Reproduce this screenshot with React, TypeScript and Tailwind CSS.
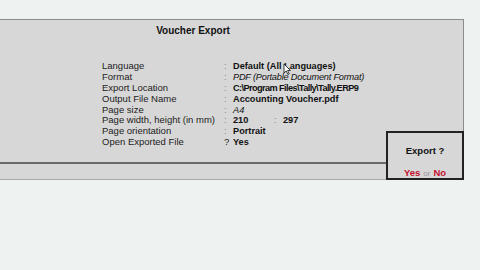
import React from 'react';

const rows: { label: string; sep: string; value: React.ReactNode; style: string }[] = [
  { label: 'Language', sep: ':', value: 'Default (All Languages)', style: 'font-bold' },
  { label: 'Format', sep: ':', value: 'PDF (Portable Document Format)', style: 'italic tracking-[-0.2px]' },
  { label: 'Export Location', sep: ':', value: 'C:\\Program Files\\Tally\\Tally.ERP9', style: 'font-bold tracking-[-0.6px]' },
  { label: 'Output File Name', sep: ':', value: 'Accounting Voucher.pdf', style: 'font-bold' },
  { label: 'Page size', sep: ':', value: 'A4', style: 'italic' },
  {
    label: 'Page width, height (in mm)',
    sep: ':',
    value: (
      <span className="flex">
        <span className="w-[41px]">210</span>
        <span className="w-[9px] font-normal text-[#888]">:</span>
        <span>297</span>
      </span>
    ),
    style: 'font-bold',
  },
  { label: 'Page orientation', sep: ':', value: 'Portrait', style: 'font-bold' },
  { label: 'Open Exported File', sep: '?', value: 'Yes', style: 'font-bold' },
];

export default function App() {
  return (
    <div
      className="relative w-[480px] h-[270px] overflow-hidden bg-[#eef2f1] pt-[19px] text-[#111]"
      style={{ fontFamily: '"Liberation Sans", Arial, sans-serif' }}
    >
      <div className="w-[464px] h-[161px] bg-[#d7d7d7] border-t border-r border-[#8c8c8c] border-b border-b-[#a8a8a8] flex flex-col">
        <div className="w-[386px] h-[144px] border-b-2 border-[#6a6a6a] flex flex-col">
          <div className="text-center text-[10px] font-bold pt-[5px] leading-[12px]">Voucher Export</div>
          <div className="mt-[24px] pl-[102px] flex flex-col text-[9.5px]">
            {rows.map((r) => (
              <div key={r.label} className="flex h-[10.9px] leading-[10.9px]">
                <span className="w-[122px] text-[#222]">{r.label}</span>
                <span className={`w-[9px] ${r.sep === '?' ? 'text-[#222]' : 'text-[#888]'}`}>{r.sep}</span>
                <span className={`text-[9.2px] ${r.style}`}>{r.value}</span>
              </div>
            ))}
          </div>
        </div>
        <div className="flex-1" />
      </div>

      {/* mouse pointer */}
      <svg className="absolute left-[283px] top-[63px]" width="8" height="12" viewBox="0 0 8 12">
        <path d="M1 1 L1 10 L3.2 8 L5 11.5 L6.3 10.8 L4.6 7.5 L7.5 7.5 Z" fill="#fff" stroke="#111" strokeWidth="0.8" />
      </svg>

      {/* confirm box */}
      <div className="absolute left-[386px] top-[131px] w-[78px] h-[49px] bg-[#d7d7d7] border-2 border-[#222] flex flex-col items-center">
        <div className="mt-[12px] text-[9.5px] font-bold leading-[12px]">Export ?</div>
        <div className="mt-[10px] text-[9.5px] font-bold leading-[12px] flex items-baseline gap-[3px]">
          <span className="text-[#c4122f]">Yes</span>
          <span className="font-normal text-[#999] text-[8px]">or</span>
          <span className="text-[#c4122f]">No</span>
        </div>
      </div>
    </div>
  );
}
